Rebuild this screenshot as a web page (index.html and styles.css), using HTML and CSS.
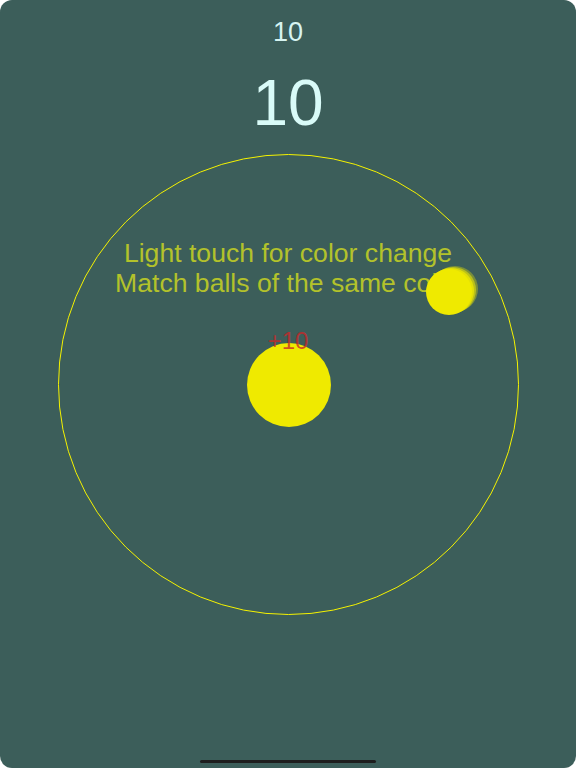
FILE: index.html
```html
<!DOCTYPE html>
<html>
<head>
<meta charset="utf-8">
<link rel="stylesheet" href="styles.css">
</head>
<body>
<div class="screen">
  <div class="score-small">10</div>
  <div class="score-big">10</div>
  <div class="field">
    <div class="hint">Light touch for color change<br>Match balls of the same color</div>
    <div class="ball-main"></div>
    <div class="plus">+10</div>
    <div class="ball-small ghost3"></div>
    <div class="ball-small ghost2"></div>
    <div class="ball-small ghost1"></div>
    <div class="ball-small"></div>
  </div>
  <div class="home-bar"></div>
</div>
</body>
</html>
```
FILE: styles.css
```css
html, body {
  margin: 0;
  padding: 0;
  background: #ffffff;
}
.screen {
  width: 576px;
  height: 768px;
  background: #3c5e5a;
  border-radius: 12px;
  overflow: hidden;
  display: flex;
  flex-direction: column;
  align-items: center;
  font-family: "Liberation Sans", Arial, sans-serif;
}
.score-small {
  margin-top: 16px;
  font-size: 27px;
  line-height: 32px;
  color: #d6f4f1;
}
.score-big {
  margin-top: 23px;
  font-size: 64px;
  line-height: 64px;
  color: #d9fbf8;
}
.field {
  position: relative;
  margin-top: 19px;
  width: 461px;
  height: 461px;
  box-sizing: border-box;
  border: 1px solid #f5f300;
  border-radius: 50%;
  padding-top: 83px;
}
.hint {
  text-align: center;
  font-size: 26.6px;
  line-height: 30px;
  color: #b3c22b;
  white-space: nowrap;
}
.ball-main {
  position: absolute;
  left: 188px;
  top: 188px;
  width: 84px;
  height: 84px;
  border-radius: 50%;
  background: #efea00;
}
.plus {
  position: absolute;
  left: 0;
  right: 0;
  top: 172px;
  text-align: center;
  font-size: 24px;
  line-height: 28px;
  color: rgba(200, 40, 40, 0.8);
}
.ball-small {
  position: absolute;
  left: 367px;
  top: 114px;
  width: 46px;
  height: 46px;
  border-radius: 50%;
  background: #efea00;
}
.ghost1 {
  left: 369px;
  top: 113px;
  opacity: 0.75;
}
.ghost2 {
  left: 371px;
  top: 112px;
  opacity: 0.55;
}
.ghost3 {
  left: 373px;
  top: 111px;
  opacity: 0.35;
}
.home-bar {
  margin-top: auto;
  margin-bottom: 5px;
  width: 176px;
  height: 3px;
  border-radius: 2px;
  background: #1e1e1e;
}
```
